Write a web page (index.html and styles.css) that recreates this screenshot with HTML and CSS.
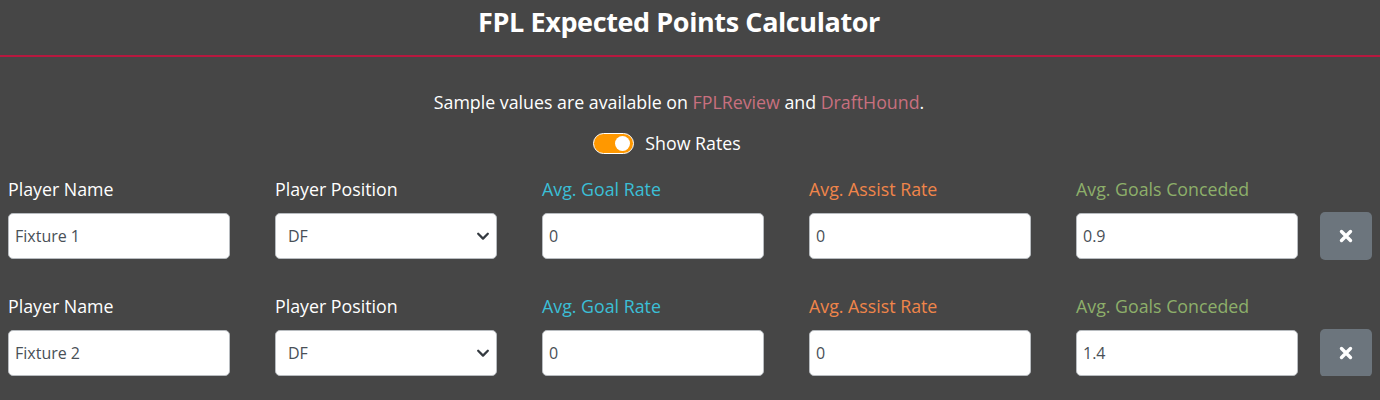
FILE: index.html
```html
<!DOCTYPE html>
<html lang="en">
<head>
<meta charset="utf-8">
<title>FPL Expected Points Calculator</title>
<link rel="stylesheet" href="styles.css">
</head>
<body>
<header class="header">
  <h1 class="title">FPL Expected Points Calculator</h1>
</header>
<main class="main">
  <p class="intro">Sample values are available on <a class="link" href="#">FPLReview</a> and <a class="link" href="#">DraftHound</a>.</p>
  <div class="toggle-row">
    <span class="switch"><span class="knob"></span></span>
    <span class="toggle-label">Show Rates</span>
  </div>

  <div class="fixture">
    <div class="field">
      <label class="label">Player Name</label>
      <div class="input">Fixture 1</div>
    </div>
    <div class="field">
      <label class="label">Player Position</label>
      <div class="input select">DF<svg class="chev" viewBox="0 0 16 16" width="14" height="14"><path d="M2.5 5.5 8 11l5.5-5.5" fill="none" stroke="#343a40" stroke-width="2.6" stroke-linecap="round" stroke-linejoin="round"/></svg></div>
    </div>
    <div class="field">
      <label class="label goal">Avg. Goal Rate</label>
      <div class="input">0</div>
    </div>
    <div class="field">
      <label class="label assist">Avg. Assist Rate</label>
      <div class="input">0</div>
    </div>
    <div class="field">
      <label class="label conceded">Avg. Goals Conceded</label>
      <div class="input">0.9</div>
    </div>
    <button class="remove" type="button"><svg viewBox="0 0 16 16" width="16" height="16"><path d="M3.5 3.5l9 9M12.5 3.5l-9 9" stroke="#fff" stroke-width="3.4" stroke-linecap="round"/></svg></button>
  </div>

  <div class="fixture">
    <div class="field">
      <label class="label">Player Name</label>
      <div class="input">Fixture 2</div>
    </div>
    <div class="field">
      <label class="label">Player Position</label>
      <div class="input select">DF<svg class="chev" viewBox="0 0 16 16" width="14" height="14"><path d="M2.5 5.5 8 11l5.5-5.5" fill="none" stroke="#343a40" stroke-width="2.6" stroke-linecap="round" stroke-linejoin="round"/></svg></div>
    </div>
    <div class="field">
      <label class="label goal">Avg. Goal Rate</label>
      <div class="input">0</div>
    </div>
    <div class="field">
      <label class="label assist">Avg. Assist Rate</label>
      <div class="input">0</div>
    </div>
    <div class="field">
      <label class="label conceded">Avg. Goals Conceded</label>
      <div class="input">1.4</div>
    </div>
    <button class="remove" type="button"><svg viewBox="0 0 16 16" width="16" height="16"><path d="M3.5 3.5l9 9M12.5 3.5l-9 9" stroke="#fff" stroke-width="3.4" stroke-linecap="round"/></svg></button>
  </div>
</main>
</body>
</html>
```
FILE: styles.css
```css
* { box-sizing: border-box; }
html, body {
  margin: 0;
  padding: 0;
  background: #464646;
  color: #fff;
  font-family: "Open Sans", "Noto Sans", sans-serif;
}
.header {
  height: 57px;
  border-bottom: 2px solid #b8183f;
  display: flex;
  justify-content: center;
  padding: 2px 22px 0 0;
}
.title {
  margin: 0;
  font-size: 27px;
  font-weight: 700;
  line-height: 40px;
  letter-spacing: -0.4px;
}
.main {
  padding: 0 8px;
}
.intro {
  margin: 0;
  padding: 32px 22px 0 0;
  text-align: center;
  font-size: 17.8px;
  line-height: 26px;
}
.link {
  color: #c8707f;
  text-decoration: none;
}
.toggle-row {
  display: flex;
  justify-content: center;
  align-items: center;
  gap: 11px;
  margin-top: 17px;
  height: 22px;
  padding-right: 46px;
}
.switch {
  width: 41px;
  height: 21px;
  border-radius: 11px;
  background: #ff9800;
  border: 1px solid #fff;
  display: flex;
  justify-content: flex-end;
  align-items: center;
  padding-right: 3px;
}
.knob {
  width: 15px;
  height: 15px;
  border-radius: 50%;
  background: #fff;
}
.toggle-label {
  font-size: 17.8px;
}
.fixture {
  display: grid;
  grid-template-columns: repeat(5, 222px) 52px;
  column-gap: 45px;
  align-items: end;
  margin-top: 23px;
}
.fixture + .fixture {
  margin-top: 35px;
}
.field {
  display: flex;
  flex-direction: column;
}
.label {
  font-size: 17.8px;
  line-height: 24px;
  margin-bottom: 12px;
}
.label.goal { color: #3bbfd6; }
.label.assist { color: #f0854a; }
.label.conceded { color: #8daf6a; }
.input {
  height: 46px;
  background: #fff;
  border: 1px solid #b8bcc0;
  border-radius: 5px;
  color: #495057;
  font-size: 16px;
  display: flex;
  align-items: center;
  padding: 0 6px;
}
.input.select {
  justify-content: space-between;
  padding: 0 6px 0 12px;
}
.remove {
  grid-column: 6;
  margin-left: -23px;
  width: 52px;
  height: 48px;
  margin-bottom: -1px;
  background: #6c757d;
  border: none;
  border-radius: 5px;
  display: flex;
  align-items: center;
  justify-content: center;
  padding: 0;
}
```
